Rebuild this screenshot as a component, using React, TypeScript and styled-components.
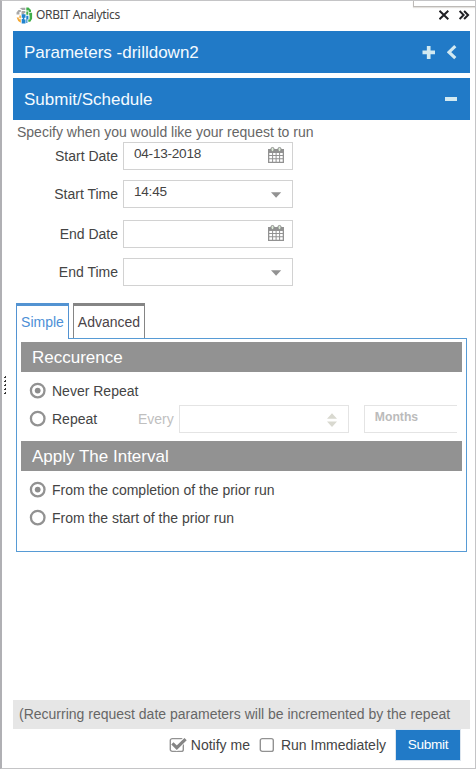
import React from "react";
import styled, { createGlobalStyle } from "styled-components";

const GlobalStyle = createGlobalStyle`
  * { box-sizing: border-box; }
  body { margin: 0; background: #fff; }
`;

const Window = styled.main`
  position: relative;
  display: flex;
  flex-direction: column;
  width: 476px;
  height: 769px;
  padding: 0 5px 0 11px;
  overflow: hidden;
  border: 1px solid #c4c4c6;
  border-left: 2px solid #b0b0b4;
  background: #fff;
  color: #444;
  font: 14px/16px "Liberation Sans", Arial, sans-serif;
  white-space: nowrap;
`;

const TitleBar = styled.header`
  display: flex;
  flex: none;
  align-items: center;
  height: 30px;
  padding: 0 0 2px 3px;
  font: 12px/16px "Noto Sans", sans-serif;
`;

const AppName = styled.span`
  width: 84px;
  margin-left: 3px;
  letter-spacing: -0.3px;
`;

const WindowActions = styled.div`
  display: flex;
  gap: 10px;
  margin-left: auto;
`;

const CornerTab = styled.div`
  position: absolute;
  top: 0;
  right: 0;
  width: 62px;
  height: 6px;
  border: solid #bdbab7;
  border-width: 0 0 1px 1px;
  box-shadow: 0 1px 1px #e4e2de;
`;

const Grip = styled.div`
  position: absolute;
  left: 2px;
  top: 375px;
`;

const SectionBar = styled.div`
  display: flex;
  flex: none;
  align-items: center;
  justify-content: space-between;
  height: 42px;
  margin-bottom: 5px;
  padding: 0 13px 0 11px;
  background: #217ac7;
  color: #f4faff;
  font-size: 17px;
`;

const BarTitle = styled.span<{ $width: number }>`
  width: ${(p) => p.$width}px;
  padding-top: 2px;
`;

const BarActions = styled.div`
  display: flex;
  align-items: center;
  gap: 12px;
`;

const Intro = styled.p`
  flex: none;
  height: 17px;
  margin: 0 0 0 4px;
  color: #666;
  line-height: 15px;
`;

const ScheduleForm = styled.div`
  display: flex;
  flex: none;
  flex-direction: column;
`;

const FieldRow = styled.label<{ $gap: number }>`
  display: flex;
  align-items: center;
  height: 28px;
  margin-bottom: ${(p) => p.$gap}px;
`;

const FieldLabel = styled.span`
  width: 105px;
  margin-right: 5px;
  text-align: right;
`;

const FieldBox = styled.span<{ $disabled?: boolean }>`
  display: flex;
  flex: none;
  justify-content: space-between;
  width: 170px;
  height: 28px;
  padding: 3px 8px 0 10px;
  border: 1px solid ${(p) => (p.$disabled ? "#e4e4e4" : "#d2d2d2")};
  background: #fff;
  color: ${(p) => (p.$disabled ? "#bbb" : "#444")};
`;

const FieldValue = styled.span<{ $bold?: boolean }>`
  font-size: ${(p) => (p.$bold ? 12.2 : 13.6)}px;
  font-weight: ${(p) => (p.$bold ? 700 : 400)};
  letter-spacing: ${(p) => (p.$bold ? 0 : -0.25)}px;
  line-height: 16px;
`;

const TabStrip = styled.div`
  display: flex;
  flex: none;
  gap: 4px;
  height: 36px;
  margin: 17px 0 -1px 3px;
`;

const Tab = styled.button<{ $active?: boolean }>`
  position: relative;
  width: ${(p) => (p.$active ? 53 : 72)}px;
  height: ${(p) => (p.$active ? 36 : 35)}px;
  padding: 0 0 ${(p) => (p.$active ? 2 : 0)}px;
  border: 1px solid ${(p) => (p.$active ? "#5393d2" : "#858585")};
  border-top-width: 3px;
  border-bottom-width: 0;
  background: #fff;
  color: ${(p) => (p.$active ? "#4d8fd6" : "#4a4348")};
  font: inherit;
  z-index: 1;
`;

const TabPanel = styled.section`
  flex: none;
  width: 451px;
  height: 214px;
  margin-left: 3px;
  padding: 3px 4px;
  border: 1px solid #579bd5;
`;

const GroupTitle = styled.h2`
  height: 30px;
  margin: 0;
  padding: 1px 11px 0;
  background: #929292;
  color: #fff;
  font-size: 17px;
  font-weight: 400;
  line-height: 30px;
`;

const OptionGroup = styled.div<{ $height: number }>`
  display: flex;
  flex-direction: column;
  height: ${(p) => p.$height}px;
  padding: 5px 5px 0 8px;
`;

const OptionRow = styled.div`
  display: flex;
  align-items: center;
  height: 28px;
`;

const OptionLabel = styled.label`
  display: flex;
  align-items: center;
  gap: 5px;
`;

const RepeatControls = styled.div`
  display: flex;
  align-items: center;
  width: 319px;
  margin-left: auto;
  overflow: hidden;
  color: #bfbfbf;
`;

const EveryLabel = styled.span`
  width: 36px;
  margin-right: 5px;
`;

const UnitSlot = styled.span`
  margin-left: 15px;
`;

const Note = styled.div`
  flex: none;
  height: 29px;
  margin-top: auto;
  padding-left: 6px;
  background: #e6e6e6;
  color: #666;
  line-height: 28px;
`;

const Footer = styled.footer`
  display: flex;
  flex: none;
  align-items: center;
  justify-content: flex-end;
  height: 39px;
  padding: 0 9px 7px 0;
`;

const CheckOption = styled.label<{ $after: number }>`
  display: flex;
  align-items: center;
  gap: 4px;
  margin-right: ${(p) => p.$after}px;
`;

const SubmitButton = styled.button`
  width: 66px;
  height: 32px;
  padding: 0 0 1px;
  border: 1px solid #dce5ee;
  background: #217ac7;
  color: #fff;
  font: 13.6px/16px "Liberation Sans", Arial, sans-serif;
  letter-spacing: -0.3px;
`;

const Drawing = styled.svg`
  display: block;
  flex: none;
`;

function Logo() {
  return (
    <Drawing width="17" height="17" viewBox="0 0 17 17">
      <path d="M0.5 7.5V5.5l2-2.5h2.3v2H3.4v2.5zM3.5 2l2-1.2h3.8v2.3H5.6V2zM6 4h3.3v2.3H8V7.5H5.5V4.6z" fill="#a8a8a8" />
      <path d="M10.3 0.6h2.2L15 3v2h-2.2V3.4h-2.5zM10.3 4.4h2v3.4h-2zM13.2 5.8h2.9v6l-1.8 3h-2v-2.3h1.3V8.3h-0.4z" fill="#3fae49" />
      <path d="M0.7 10.6h2.1v1.6h2v3.6L2.2 14zM3.4 8.6h1.4v2.6H3.4z" fill="#f5a62f" />
      <path d="M5.7 7.2h3.8v3.6H8.3v1.6h1.2v4.1H5.7v-4.4h1.1v-1.3H5.7zM10.3 8.8h2.1v3.4h-1v3.9h-1.1z" fill="#1f82cd" />
    </Drawing>
  );
}

function Calendar() {
  return (
    <Drawing width="16" height="18" viewBox="0 0 16 18">
      <path d="M0 3h16v14H0z" fill="#929292" />
      <path d="M1.3 7h2.8v2H1.3zm3.8 0h2.5v2H5.1zm3.5 0h2.5v2H8.6zm3.5 0h2.6v2h-2.6zM1.3 10h2.8v2.3H1.3zm3.8 0h2.5v2.3H5.1zm3.5 0h2.5v2.3H8.6zm3.5 0h2.6v2.3h-2.6zM1.3 13.3h2.8v2.5H1.3zm3.8 0h2.5v2.5H5.1zm3.5 0h2.5v2.5H8.6zm3.5 0h2.6v2.5h-2.6z" fill="#fff" />
      <rect x="3" y="1.5" width="3" height="4" rx="1.4" fill="#dcebd7" stroke="#8c8c8c" />
      <rect x="10" y="1.5" width="3" height="4" rx="1.4" fill="#dcebd7" stroke="#8c8c8c" />
    </Drawing>
  );
}

function Caret() {
  return (
    <Drawing width="16" height="18" viewBox="0 0 16 18">
      <path d="M3 8.3h10.2L8.1 13.7z" fill="#929292" />
    </Drawing>
  );
}

function Stepper() {
  return (
    <Drawing width="16" height="22" viewBox="0 0 16 22">
      <path d="M3 9.8L8 4.2l5 5.6zM3 12.4h10L8 18z" fill="#d9d9d0" />
    </Drawing>
  );
}

function Radio({ checked }: { checked?: boolean }) {
  return (
    <Drawing width="18" height="18" viewBox="0 0 18 18">
      <circle cx="8.7" cy="8.6" r="6.8" fill="#fff" stroke="#929292" strokeWidth="2.3" />
      {checked && <circle cx="8.7" cy="8.6" r="2.9" fill="#8c8c8c" />}
    </Drawing>
  );
}

function Checkbox({ checked }: { checked?: boolean }) {
  return (
    <Drawing width="18" height="16" viewBox="0 0 18 16">
      <rect x="1.3" y="1.6" width="13" height="12.8" rx="2" fill="#fff" stroke="#929292" strokeWidth="1.4" />
      {checked && (
        <>
          <path d="M3.6 6.5l4.2 4.2L16.7 1.8" fill="none" stroke="#fff" strokeWidth="5" />
          <path d="M3.4 6.3l4.4 4.4 8.8-8.6" fill="none" stroke="#858585" strokeWidth="3.2" />
        </>
      )}
    </Drawing>
  );
}

export default function App() {
  return (
    <>
      <GlobalStyle />
      <Window>
        <CornerTab />
        <Grip>
          <Drawing width="3" height="20" viewBox="0 0 3 20">
            <path d="M1 1v18" stroke="#333" strokeWidth="2" strokeDasharray="1 3" />
            <path d="M1.5 0v18" stroke="#333" strokeWidth="1" strokeDasharray="1 3" />
          </Drawing>
        </Grip>
        <TitleBar>
          <Logo />
          <AppName>ORBIT Analytics</AppName>
          <WindowActions>
            <Drawing width="10" height="10" viewBox="0 0 10 10">
              <path d="M0.5 0.8l8.8 8.4M9.3 0.8L0.5 9.2" stroke="#202024" strokeWidth="2" />
            </Drawing>
            <Drawing width="11" height="10" viewBox="0 0 11 10">
              <path d="M0.6 1l4 4-4 4M5.1 1l4 4-4 4" fill="none" stroke="#202024" strokeWidth="2" />
            </Drawing>
          </WindowActions>
        </TitleBar>
        <SectionBar>
          <BarTitle $width={180}>Parameters -drilldown2</BarTitle>
          <BarActions>
            <Drawing width="13" height="13" viewBox="0 0 13 13">
              <path d="M0.5 6.3h12.5M6.7 0v13" stroke="#d2e9f1" strokeWidth="3.7" />
            </Drawing>
            <Drawing width="10" height="15" viewBox="0 0 10 15">
              <path d="M8.3 1.2L2 7.2l6.3 6" fill="none" stroke="#d2e9f1" strokeWidth="3.2" />
            </Drawing>
          </BarActions>
        </SectionBar>
        <SectionBar>
          <BarTitle $width={130}>Submit/Schedule</BarTitle>
          <Drawing width="12" height="4" viewBox="0 0 12 4">
            <path d="M0 2h12" stroke="#d2e9f1" strokeWidth="4" />
          </Drawing>
        </SectionBar>
        <Intro>Specify when you would like your request to run</Intro>
        <ScheduleForm>
          <FieldRow $gap={10}>
            <FieldLabel>Start Date</FieldLabel>
            <FieldBox><FieldValue>04-13-2018</FieldValue><Calendar /></FieldBox>
          </FieldRow>
          <FieldRow $gap={12}>
            <FieldLabel>Start Time</FieldLabel>
            <FieldBox><FieldValue>14:45</FieldValue><Caret /></FieldBox>
          </FieldRow>
          <FieldRow $gap={10}>
            <FieldLabel>End Date</FieldLabel>
            <FieldBox><FieldValue /><Calendar /></FieldBox>
          </FieldRow>
          <FieldRow $gap={0}>
            <FieldLabel>End Time</FieldLabel>
            <FieldBox><FieldValue /><Caret /></FieldBox>
          </FieldRow>
        </ScheduleForm>
        <TabStrip>
          <Tab $active>Simple</Tab>
          <Tab>Advanced</Tab>
        </TabStrip>
        <TabPanel>
          <GroupTitle>Reccurence</GroupTitle>
          <OptionGroup $height={69}>
            <OptionRow><OptionLabel><Radio checked />Never Repeat</OptionLabel></OptionRow>
            <OptionRow>
              <OptionLabel><Radio />Repeat</OptionLabel>
              <RepeatControls>
                <EveryLabel>Every</EveryLabel>
                <FieldBox $disabled><FieldValue /><Stepper /></FieldBox>
                <UnitSlot><FieldBox $disabled><FieldValue $bold>Months</FieldValue></FieldBox></UnitSlot>
              </RepeatControls>
            </OptionRow>
          </OptionGroup>
          <GroupTitle>Apply The Interval</GroupTitle>
          <OptionGroup $height={77}>
            <OptionRow><OptionLabel><Radio checked />From the completion of the prior run</OptionLabel></OptionRow>
            <OptionRow><OptionLabel><Radio />From the start of the prior run</OptionLabel></OptionRow>
          </OptionGroup>
        </TabPanel>
        <Note>(Recurring request date parameters will be incremented by the repeat</Note>
        <Footer>
          <CheckOption $after={9}><Checkbox checked />Notify me</CheckOption>
          <CheckOption $after={9}><Checkbox />Run Immediately</CheckOption>
          <SubmitButton>Submit</SubmitButton>
        </Footer>
      </Window>
    </>
  );
}
